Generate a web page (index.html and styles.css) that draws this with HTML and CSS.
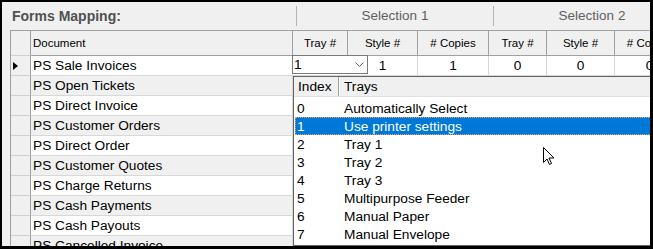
FILE: index.html
```html
<!DOCTYPE html>
<html>
<head>
<meta charset="utf-8">
<link rel="stylesheet" href="styles.css">
</head>
<body>
<div class="frame">
  <div class="titlebar">
    <div class="title">Forms Mapping:</div>
    <div class="sel">Selection 1</div>
    <div class="sel">Selection 2</div>
  </div>
  <div class="grid">
    <div class="hc rh"></div>
    <div class="hc left">Document</div>
    <div class="hc">Tray #</div>
    <div class="hc">Style #</div>
    <div class="hc"># Copies</div>
    <div class="hc">Tray #</div>
    <div class="hc">Style #</div>
    <div class="hc"># Copies</div>

    <div class="rh"><span class="tri"></span></div>
    <div class="c doc w">PS Sale Invoices</div>
    <div class="c w">1</div><div class="c w">1</div><div class="c w">1</div><div class="c w">0</div><div class="c w">0</div><div class="c w">0</div>

    <div class="rh"></div><div class="c doc g">PS Open Tickets</div>
    <div class="c g"></div><div class="c g"></div><div class="c g"></div><div class="c g"></div><div class="c g"></div><div class="c g"></div>

    <div class="rh"></div><div class="c doc w">PS Direct Invoice</div>
    <div class="c w"></div><div class="c w"></div><div class="c w"></div><div class="c w"></div><div class="c w"></div><div class="c w"></div>

    <div class="rh"></div><div class="c doc g">PS Customer Orders</div>
    <div class="c g"></div><div class="c g"></div><div class="c g"></div><div class="c g"></div><div class="c g"></div><div class="c g"></div>

    <div class="rh"></div><div class="c doc w">PS Direct Order</div>
    <div class="c w"></div><div class="c w"></div><div class="c w"></div><div class="c w"></div><div class="c w"></div><div class="c w"></div>

    <div class="rh"></div><div class="c doc g">PS Customer Quotes</div>
    <div class="c g"></div><div class="c g"></div><div class="c g"></div><div class="c g"></div><div class="c g"></div><div class="c g"></div>

    <div class="rh"></div><div class="c doc w">PS Charge Returns</div>
    <div class="c w"></div><div class="c w"></div><div class="c w"></div><div class="c w"></div><div class="c w"></div><div class="c w"></div>

    <div class="rh"></div><div class="c doc g">PS Cash Payments</div>
    <div class="c g"></div><div class="c g"></div><div class="c g"></div><div class="c g"></div><div class="c g"></div><div class="c g"></div>

    <div class="rh"></div><div class="c doc w">PS Cash Payouts</div>
    <div class="c w"></div><div class="c w"></div><div class="c w"></div><div class="c w"></div><div class="c w"></div><div class="c w"></div>

    <div class="rh"></div><div class="c doc g">PS Cancelled Invoice</div>
    <div class="c g"></div><div class="c g"></div><div class="c g"></div><div class="c g"></div><div class="c g"></div><div class="c g"></div>
  </div>

  <div class="combo">
    <span class="combo-val">1</span>
    <svg class="chev" width="9" height="5" viewBox="0 0 9 5"><path d="M0.5 0.5 L4.5 4.5 L8.5 0.5" fill="none" stroke="#606060" stroke-width="1"/></svg>
  </div>

  <div class="popup">
    <div class="phead">
      <div class="ph ph-idx">Index</div>
      <div class="ph ph-tray">Trays</div>
    </div>
    <div class="plist">
      <div class="item"><span class="idx">0</span><span>Automatically Select</span></div>
      <div class="item sel-item"><span class="idx">1</span><span>Use printer settings</span></div>
      <div class="item"><span class="idx">2</span><span>Tray 1</span></div>
      <div class="item"><span class="idx">3</span><span>Tray 2</span></div>
      <div class="item"><span class="idx">4</span><span>Tray 3</span></div>
      <div class="item"><span class="idx">5</span><span>Multipurpose Feeder</span></div>
      <div class="item"><span class="idx">6</span><span>Manual Paper</span></div>
      <div class="item"><span class="idx">7</span><span>Manual Envelope</span></div>
    </div>
  </div>

  <svg class="cursor" width="12" height="19" viewBox="0 0 12 19"><path d="M0.5 0.5 L0.5 15.5 L4 12 L6.5 17.5 L8.5 16.5 L6 11 L11 11 Z" fill="#fff" stroke="#000" stroke-width="1" stroke-linejoin="miter"/></svg>
</div>
</body>
</html>
```

FILE: styles.css
```css
* { box-sizing: border-box; }
html, body { margin: 0; padding: 0; }
body {
  background: #000;
  width: 653px;
  height: 249px;
  overflow: hidden;
  font-family: "Liberation Sans", Arial, sans-serif;
}
.frame {
  position: relative;
  margin: 2px 0 0 2px;
  width: 648px;
  height: 244px;
  background: #f0f0f0;
  overflow: hidden;
}
.titlebar {
  display: flex;
  align-items: center;
  height: 28px;
}
.title {
  flex: none;
  width: 294px;
  padding-left: 10px;
  font-weight: bold;
  font-size: 14px;
  color: #4f5050;
}
.sel {
  width: 197px;
  flex: none;
  height: 20px;
  border-left: 1px solid #b4b4b4;
  text-align: center;
  font-size: 13.5px;
  line-height: 20px;
  color: #5f5f5f;
}
.grid {
  margin-left: 8px;
  display: grid;
  grid-template-columns: 20px 262px 55px 70px 71px 58px 68px 70px;
  grid-template-rows: 25px;
  grid-auto-rows: 20px;
  border-left: 1px solid #a0a0a0;
  border-top: 1px solid #a0a0a0;
  width: 700px;
}
.hc {
  background: #f0f0f0;
  border-right: 1px solid #a0a0a0;
  border-bottom: 1px solid #a0a0a0;
  font-size: 11.5px;
  color: #000;
  display: flex;
  align-items: center;
  justify-content: center;
}
.hc.left { justify-content: flex-start; padding-left: 2px; }
.rh {
  background: #f0f0f0;
  border-right: 1px solid #a0a0a0;
  border-bottom: 1px solid #d0d0d0;
  display: flex;
  align-items: center;
  padding-left: 2px;
}
.tri {
  width: 0; height: 0;
  border-top: 4px solid transparent;
  border-bottom: 4px solid transparent;
  border-left: 5px solid #000;
}
.c {
  border-right: 1px solid #d8d8d8;
  border-bottom: 1px solid #d8d8d8;
  font-size: 13.7px;
  color: #000;
  display: flex;
  align-items: center;
  justify-content: center;
  white-space: nowrap;
}
.c.doc { justify-content: flex-start; padding-left: 2px; }
.w { background: #fff; }
.g { background: #f0f0f0; }

.combo {
  position: absolute;
  left: 290px;
  top: 53px;
  width: 76px;
  height: 19px;
  background: #fff;
  border: 1px solid #7a7a7a;
  display: flex;
  align-items: center;
  justify-content: space-between;
  padding: 0 3px 0 1px;
  font-size: 13.7px;
}
.chev { display: block; }

.popup {
  position: absolute;
  left: 291px;
  top: 74px;
  width: 420px;
  height: 170px;
  background: #fff;
  border: 1px solid #646464;
}
.phead {
  display: flex;
  height: 20px;
  background: #f0f0f0;
  border-bottom: 1px solid #e0e0e0;
}
.ph {
  font-size: 13.7px;
  display: flex;
  align-items: center;
}
.ph-idx {
  width: 45px;
  padding-left: 4px;
  border-right: 1px solid #a0a0a0;
  box-shadow: 1px 0 0 #fff;
}
.ph-tray { padding-left: 5px; }
.plist { padding: 2px 1px 0 1px; }
.item {
  display: flex;
  align-items: center;
  height: 18px;
  font-size: 13.7px;
  color: #000;
  white-space: nowrap;
}
.idx { width: 49px; padding-left: 2px; }
.sel-item {
  background: #0078d7;
  color: #fff;
  outline: 1px dotted #f0a050;
  outline-offset: -1px;
}
.cursor {
  position: absolute;
  left: 541px;
  top: 145px;
}
```
